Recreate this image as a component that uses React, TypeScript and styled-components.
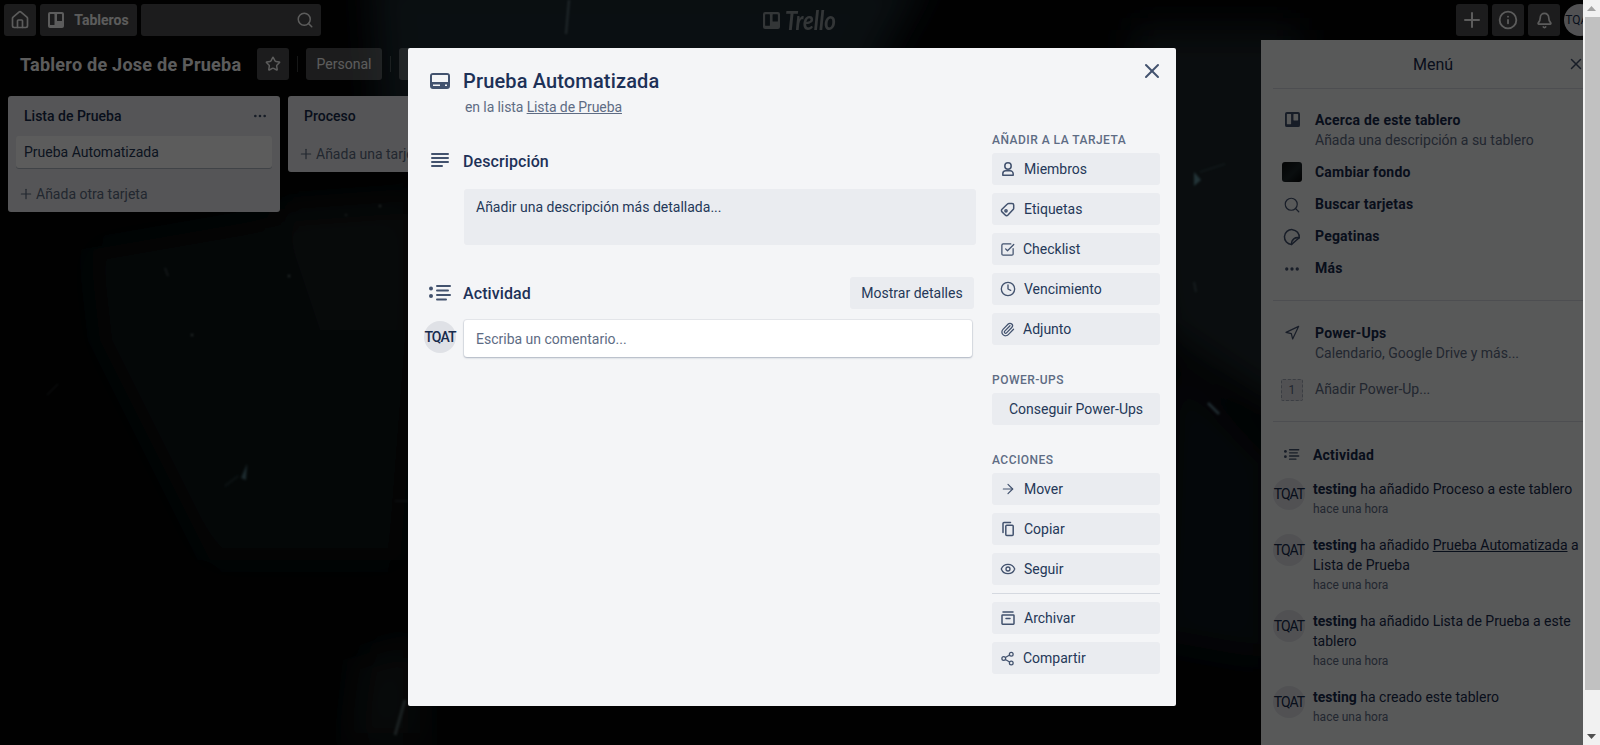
import styled, { createGlobalStyle } from "styled-components";
import {
  ArrowRight,
  Bell,
  CheckSquare,
  Clock,
  Ellipsis,
  Eye,
  Home,
  Info,
  Navigation,
  Paperclip,
  Plus,
  Search,
  Share2,
  Star,
  X,
} from "lucide-react";

const GlobalStyle = createGlobalStyle`
  html, body {
    margin: 0;
    padding: 0;
    overflow: hidden;
    background: #000;
  }
  * {
    box-sizing: border-box;
  }
  body {
    font-family: "Roboto", "Noto Sans", sans-serif;
    font-size: 14px;
    line-height: 20px;
    color: #172b4d;
  }
`;

const Page = styled.div`
  position: relative;
  width: 1600px;
  height: 745px;
  overflow: hidden;
  background: #030405;
`;
const Backdrop = styled.svg`
  position: absolute;
  inset: 0;
`;
const Board = styled.div`
  position: relative;
  display: flex;
  flex-direction: column;
  height: 100%;
`;

/* top bar */
const TopBar = styled.header`
  display: flex;
  align-items: center;
  height: 40px;
  padding: 4px;
`;
const TopGroup = styled.div<{ $end?: boolean }>`
  flex: 1 1 0;
  display: flex;
  gap: 4px;
  justify-content: ${(p) => (p.$end ? "flex-end" : "flex-start")};
`;
const TopButton = styled.div`
  display: flex;
  align-items: center;
  justify-content: center;
  gap: 10px;
  min-width: 32px;
  height: 32px;
  border-radius: 3px;
  background: rgba(255, 255, 255, 0.3);
  color: #fff;
  font-weight: 700;
`;
const BoardsButton = styled(TopButton)`
  width: 97px;
`;
const SearchBox = styled(TopButton)`
  width: 180px;
  justify-content: flex-end;
  padding-right: 7px;
`;
const Logo = styled.div`
  flex: none;
  display: flex;
  align-items: center;
  gap: 5px;
  width: 74px;
  color: rgba(255, 255, 255, 0.5);
  svg {
    flex: none;
  }
`;
const LogoText = styled.span`
  font-family: "Lato", sans-serif;
  font-style: italic;
  font-weight: 700;
  font-size: 27px;
  line-height: 30px;
  display: inline-block;
  transform: scaleX(0.82);
  transform-origin: left center;
`;
const UserBadge = styled.div`
  width: 32px;
  height: 32px;
  border-radius: 50%;
  background: #dfe1e6;
  color: #172b4d;
  font-size: 12px;
  line-height: 32px;
  text-align: center;
  white-space: nowrap;
  overflow: hidden;
`;

/* board bar */
const BoardBar = styled.div`
  display: flex;
  align-items: center;
  height: 32px;
  margin-top: 8px;
  padding: 0 8px;
`;
const BoardTitle = styled.h1`
  width: 249px;
  height: 32px;
  flex: none;
  margin: 0;
  padding: 0 12px;
  font-size: 18px;
  line-height: 34px;
  font-weight: 700;
  letter-spacing: 0.25px;
  color: #fff;
  white-space: nowrap;
`;
const BarButton = styled.div`
  display: flex;
  align-items: center;
  justify-content: center;
  min-width: 32px;
  height: 32px;
  padding: 0 6px;
  border-radius: 3px;
  background: rgba(255, 255, 255, 0.3);
  color: #fff;
  white-space: nowrap;
`;
const BarLabel = styled(BarButton)`
  width: 76px;
  padding: 0;
`;
const BarDivider = styled.span`
  width: 1px;
  height: 16px;
  margin: 0 8px;
  background: rgba(255, 255, 255, 0.24);
`;

/* lists */
const Lists = styled.div`
  display: flex;
  align-items: flex-start;
  gap: 8px;
  margin-top: 16px;
  padding-left: 8px;
`;
const List = styled.section`
  width: 272px;
  border-radius: 3px;
  background: #ebecf0;
  padding-bottom: 2px;
`;
const ListHead = styled.div`
  display: flex;
  align-items: center;
  justify-content: space-between;
  height: 40px;
  padding: 0 12px 0 16px;
  font-weight: 500;
  color: #172b4d;
`;
const CardList = styled.div`
  padding: 0 8px 2px;
`;
const Card = styled.div`
  height: 32px;
  margin-bottom: 8px;
  padding: 6px 8px;
  border-radius: 3px;
  background: #fff;
  box-shadow: 0 1px 0 rgba(9, 30, 66, 0.25);
  color: #253858;
`;
const AddCard = styled.div`
  display: flex;
  align-items: center;
  gap: 2px;
  height: 32px;
  margin: 0 8px;
  padding: 0 2px;
  color: #5e6c84;
  white-space: nowrap;
`;

/* side menu */
const Menu = styled.aside`
  position: absolute;
  top: 40px;
  left: 1261px;
  width: 344px;
  bottom: 0;
  padding: 0 12px;
  background: #f4f5f7;
`;
const MenuHead = styled.div`
  position: relative;
  height: 49px;
  border-bottom: 1px solid rgba(9, 30, 66, 0.13);
  font-size: 16px;
  font-weight: 400;
  line-height: 49px;
  text-align: center;
`;
const MenuClose = styled.span`
  position: absolute;
  right: 8px;
  top: 15px;
  display: flex;
`;
const MenuSection = styled.div<{ $top: number }>`
  padding: ${(p) => p.$top}px 0 16px;
  border-bottom: 1px solid rgba(9, 30, 66, 0.13);
`;
const MenuRow = styled.div<{ $gap?: number }>`
  display: flex;
  align-items: flex-start;
  padding: 6px 0;
  margin-top: ${(p) => p.$gap ?? 0}px;
  font-weight: 700;
  letter-spacing: 0.2px;
`;
const MenuIcon = styled.span`
  flex: none;
  display: flex;
  justify-content: center;
  width: 38px;
  padding: 2px 0 0;
  margin-right: 4px;
`;
const MenuSub = styled.div`
  font-weight: 400;
  letter-spacing: 0;
  color: #5e6c84;
`;
const Swatch = styled.span`
  display: block;
  width: 20px;
  height: 20px;
  margin-top: -2px;
  border-radius: 3px;
  background: linear-gradient(135deg, #0a0d0e, #1c2629 55%, #050607);
`;
const PowerBox = styled.span`
  display: block;
  width: 22px;
  height: 22px;
  margin: -2px 0;
  border: 1px dashed #a5adba;
  border-radius: 2px;
  background: #dfe1e6;
  color: #5e6c84;
  font-size: 12px;
  line-height: 20px;
  font-weight: 400;
  text-align: center;
`;
const Feed = styled.div`
  padding-top: 23px;
`;
const FeedHead = styled.div`
  display: flex;
  align-items: center;
  margin-bottom: 13px;
  font-weight: 700;
  letter-spacing: 0.2px;
`;
const FeedHeadIcon = styled.span`
  display: flex;
  justify-content: center;
  width: 38px;
  margin-right: 2px;
  color: #42526e;
`;
const FeedItem = styled.div`
  display: flex;
  margin-bottom: 16px;
`;
const FeedBadge = styled.div<{ $strong?: boolean }>`
  flex: none;
  display: flex;
  justify-content: center;
  width: 32px;
  height: 32px;
  border-radius: 50%;
  background: #dfe1e6;
  color: #172b4d;
  font-size: 14px;
  font-weight: ${(p) => (p.$strong ? 500 : 400)};
  letter-spacing: -1px;
  line-height: 32px;
  white-space: nowrap;
`;
const FeedBody = styled.div`
  height: 100%;
  margin-left: 8px;
  padding-top: 1px;
  margin-bottom: -1px;
  color: #172b4d;
  a {
    color: #172b4d;
    text-decoration: underline;
  }
`;
const FeedTime = styled.div`
  font-size: 12px;
  color: #5e6c84;
`;

/* modal */
const Overlay = styled.div`
  position: absolute;
  inset: 0;
  display: flex;
  justify-content: center;
  align-items: flex-start;
  padding: 48px 16px 0 0;
  background: rgba(0, 0, 0, 0.64);
`;
const Modal = styled.div`
  position: relative;
  display: flex;
  width: 768px;
  padding: 0 16px 32px;
  border-radius: 2px;
  background: #f4f5f7;
  color: #172b4d;
`;
const ModalClose = styled.span`
  position: absolute;
  top: 11px;
  right: 12px;
  display: flex;
  color: #42526e;
`;
const Main = styled.div`
  width: 552px;
  padding-top: 21px;
`;
const HeadRow = styled.div`
  display: flex;
  align-items: center;
  gap: 8px;
`;
const HeadIcon = styled.span`
  flex: none;
  display: flex;
  justify-content: center;
  width: 32px;
  color: #42526e;
`;
const CardTitle = styled.h2`
  margin: 0 0 0 -1px;
  font-size: 20px;
  line-height: 24px;
  font-weight: 500;
  letter-spacing: 0.15px;
  color: #1d3157;
`;
const InList = styled.div`
  margin: 4px 0 0 41px;
  letter-spacing: -0.1px;
  color: #5e6c84;
  a {
    color: #5e6c84;
    text-decoration: underline;
  }
`;
const SectionTitle = styled.h3`
  flex: 1;
  height: 24px;
  margin: 0 0 0 -1px;
  font-size: 16px;
  line-height: 26px;
  font-weight: 500;
  letter-spacing: 0.1px;
  color: #1d3157;
`;
const DescriptionHead = styled(HeadRow)`
  margin-top: 32px;
`;
const DescriptionBox = styled.div`
  height: 56px;
  margin: 16px 0 0 40px;
  padding: 8px 12px;
  border-radius: 3px;
  background: rgba(9, 30, 66, 0.04);
  color: #253858;
`;
const ActivityHead = styled(HeadRow)`
  height: 32px;
  margin-top: 32px;
  padding-right: 2px;
`;
const DetailsButton = styled.div`
  width: 124px;
  height: 32px;
  padding: 6px 0;
  border-radius: 3px;
  background: rgba(9, 30, 66, 0.04);
  color: #253858;
  text-align: center;
  white-space: nowrap;
`;
const CommentRow = styled.div`
  display: flex;
  align-items: flex-start;
  gap: 8px;
  margin-top: 11px;
  padding: 0 4px 0 0;
`;
const CommentAvatar = styled.div`
  margin-top: 1px;
`;
const CommentBox = styled.div`
  flex: 1;
  height: 37px;
  padding: 9px 12px 7px;
  border-radius: 3px;
  background: #fff;
  box-shadow: 0 1px 2px rgba(9, 30, 66, 0.25), 0 0 0 1px rgba(9, 30, 66, 0.06);
  color: #5e6c84;
`;
const Sidebar = styled.div`
  width: 168px;
  margin-left: 16px;
  padding-top: 84px;
`;
const SideLabel = styled.h4<{ $first?: boolean }>`
  margin: ${(p) => (p.$first ? 0 : "27px")} 0 5px;
  font-size: 12px;
  line-height: 16px;
  font-weight: 500;
  letter-spacing: 0.04em;
  text-transform: uppercase;
  color: #5e6c84;
`;
const SideButton = styled.div<{ $center?: boolean }>`
  display: flex;
  align-items: center;
  justify-content: ${(p) => (p.$center ? "center" : "flex-start")};
  gap: 8px;
  height: 32px;
  padding: 0 8px;
  border-radius: 3px;
  background: rgba(9, 30, 66, 0.04);
  color: #253858;
  white-space: nowrap;
  & + & {
    margin-top: 8px;
  }
  svg {
    flex: none;
    color: #42526e;
  }
`;
const SideDivider = styled.hr`
  height: 1px;
  margin: 8px 0;
  border: 0;
  background: rgba(9, 30, 66, 0.13);
`;

/* fake browser scrollbar sitting over the page */
const ScrollBar = styled.div`
  position: absolute;
  top: 0;
  right: 0;
  width: 17px;
  height: 100%;
  display: flex;
  flex-direction: column;
  background: #f1f1f1;
`;
const ScrollArrow = styled.div`
  flex: none;
  display: flex;
  align-items: center;
  justify-content: center;
  height: 17px;
`;
const ScrollThumb = styled.div`
  height: 673px;
  margin-left: 2px;
  background: #c1c1c1;
`;
const ScrollRest = styled.div`
  flex: 1;
`;

const BoardGlyph = ({ size = 16, color = "currentColor" }: { size?: number; color?: string }) => (
  <svg width={size} height={size} viewBox="0 0 16 16" fill={color}>
    <path
      fillRule="evenodd"
      d="M2 0h12a2 2 0 0 1 2 2v12a2 2 0 0 1-2 2H2a2 2 0 0 1-2-2V2a2 2 0 0 1 2-2zm.5 2a.5.5 0 0 0-.5.5V12.5a.5.5 0 0 0 .5.5h3.5a.5.5 0 0 0 .5-.5V2.5a.5.5 0 0 0-.5-.5zm7 0a.5.5 0 0 0-.5.5V8.5a.5.5 0 0 0 .5.5h4a.5.5 0 0 0 .5-.5V2.5a.5.5 0 0 0-.5-.5z"
    />
  </svg>
);

const CardGlyph = () => (
  <svg width="20" height="16" viewBox="0 0 20 16" fill="currentColor">
    <path
      fillRule="evenodd"
      d="M3 0h14a3 3 0 0 1 3 3v10a3 3 0 0 1-3 3H3a3 3 0 0 1-3-3V3a3 3 0 0 1 3-3zm-.5 2a.5.5 0 0 0-.5.5V9h16V2.5a.5.5 0 0 0-.5-.5zM3 11.5v1.5h7v-1.5zm12 0v1.5h2v-1.5z"
    />
  </svg>
);

const LinesGlyph = () => (
  <svg width="20" height="16" viewBox="0 0 20 16" fill="currentColor">
    <rect x="1" y="0" width="18" height="2" rx="1" />
    <rect x="1" y="4" width="18" height="2" rx="1" />
    <rect x="1" y="8" width="18" height="2" rx="1" />
    <rect x="1" y="12" width="12" height="2" rx="1" />
  </svg>
);

const ActivityGlyph = ({ scale = 1 }: { scale?: number }) => (
  <svg width={22 * scale} height={16 * scale} viewBox="0 0 22 16" fill="currentColor">
    <circle cx="2" cy="3.5" r="2" />
    <circle cx="2" cy="11" r="2" />
    <rect x="7" y="0" width="15" height="2" rx="1" />
    <rect x="7" y="4.5" width="13" height="2" rx="1" />
    <rect x="7" y="9" width="15" height="2" rx="1" />
    <rect x="7" y="13.5" width="11" height="2" rx="1" />
  </svg>
);

const outline = {
  fill: "none",
  stroke: "currentColor",
  strokeWidth: 1.5,
  strokeLinecap: "round" as const,
  strokeLinejoin: "round" as const,
};

const MemberGlyph = () => (
  <svg width="16" height="16" viewBox="0 0 16 16" {...outline}>
    <circle cx="8" cy="5" r="3.2" />
    <path d="M2.8 14.2v-1.4a3 3 0 0 1 3-3h4.4a3 3 0 0 1 3 3v1.4z" />
  </svg>
);

const LabelGlyph = () => (
  <svg width="16" height="16" viewBox="0 0 16 16" {...outline}>
    <path d="M2 8.2 7.4 3a2 2 0 0 1 1.4-.6h3.3a1.6 1.6 0 0 1 1.6 1.6v3.2a2 2 0 0 1-.6 1.4L8 14a2 2 0 0 1-2.8 0L2 10.9a1.9 1.9 0 0 1 0-2.7z" />
    <circle cx="6" cy="9.8" r="1.1" />
  </svg>
);

const CopyGlyph = () => (
  <svg width="16" height="16" viewBox="0 0 16 16" {...outline}>
    <rect x="5.8" y="4.2" width="7.4" height="10.2" rx="1" />
    <path d="M3 11.5V2.6a1 1 0 0 1 1-1h6.5" />
  </svg>
);

const ArchiveGlyph = () => (
  <svg width="16" height="16" viewBox="0 0 16 16" {...outline}>
    <path d="M3 2h10" />
    <rect x="2" y="5" width="12" height="9.2" rx="0.6" />
    <path d="M6 8.4h4" />
  </svg>
);

const StickerGlyph = ({ color }: { color: string }) => (
  <svg width="18" height="18" viewBox="0 0 18 18" {...outline} stroke={color}>
    <path d="M16.2 9.8A7.4 7.4 0 1 0 8.6 16.4z" />
    <path d="M16.2 9.8c-4-.8-7.9 1.4-7.6 6.6" />
  </svg>
);

const addItems = [
  { label: "Miembros", icon: <MemberGlyph /> },
  { label: "Etiquetas", icon: <LabelGlyph /> },
  { label: "Checklist", icon: <CheckSquare size={15} strokeWidth={2} /> },
  { label: "Vencimiento", icon: <Clock size={16} strokeWidth={2} /> },
  { label: "Adjunto", icon: <Paperclip size={15} strokeWidth={2} /> },
];
const moveItems = [
  { label: "Mover", icon: <ArrowRight size={16} strokeWidth={1.8} /> },
  { label: "Copiar", icon: <CopyGlyph /> },
  { label: "Seguir", icon: <Eye size={16} strokeWidth={2} /> },
];
const endItems = [
  { label: "Archivar", icon: <ArchiveGlyph /> },
  { label: "Compartir", icon: <Share2 size={15} strokeWidth={2} /> },
];

function App() {
  return (
    <Page>
      <GlobalStyle />
      <Backdrop width="1600" height="745" viewBox="0 0 1600 745">
        <defs>
          <filter id="soft" filterUnits="userSpaceOnUse" x="-100" y="-100" width="1800" height="945">
            <feGaussianBlur stdDeviation="18" />
          </filter>
          <filter id="softer" filterUnits="userSpaceOnUse" x="-100" y="-100" width="1800" height="945">
            <feGaussianBlur stdDeviation="0.8" />
          </filter>
        </defs>
        <g filter="url(#soft)">
          <polygon points="370,-30 930,-30 880,60 820,230 560,260 380,120" fill="#1b2a30" />
          <polygon points="1130,30 1300,30 1300,420 1250,390 1160,330" fill="#1a272c" />
          <polygon points="1170,360 1270,460 1270,660 1160,640" fill="#10181b" />
          <polygon points="90,250 320,210 420,300 400,560 210,560 100,340" fill="#0f1518" />
          <polygon points="280,210 420,200 420,330 320,330" fill="#131a1c" />
          <polygon points="360,660 420,640 420,745 350,745" fill="#151c1e" />
        </g>
        <g filter="url(#softer)">
          <path d="M569 0 L566 34" stroke="#5d7078" strokeWidth="2" />
          <path d="M1194 186 L1194 172 L1201 180 Z" fill="#5f8d98" />
          <path d="M1200 172 L1225 164" stroke="#3c565e" strokeWidth="1" />
          <path d="M1208 403 L1219 414" stroke="#597c8a" strokeWidth="2.5" />
          <path d="M1194 282 L1196 292" stroke="#4a5a5e" strokeWidth="1.5" />
          <path d="M241 478 L247 464 L246 480 Z" fill="#4f7480" />
          <path d="M225 486 L238 476" stroke="#2b3e44" strokeWidth="1.5" />
          <path d="M165 268 L168 276" stroke="#56646a" strokeWidth="1" />
          <path d="M47 395 L58 384" stroke="#323f43" strokeWidth="1" />
          <path d="M395 501 L408 501" stroke="#323f43" strokeWidth="1" />
          <path d="M395 735 L405 700" stroke="#4a5a5c" strokeWidth="3" />
          <circle cx="192" cy="335" r="1" fill="#9aa6a8" />
          <circle cx="289" cy="276" r="1" fill="#9aa6a8" />
          <circle cx="380" cy="206" r="1" fill="#8d999b" />
          <circle cx="346" cy="215" r="0.8" fill="#8d999b" />
        </g>
      </Backdrop>

      <Board>
        <TopBar>
          <TopGroup>
            <TopButton>
              <Home size={20} strokeWidth={2} />
            </TopButton>
            <BoardsButton>
              <BoardGlyph />
              Tableros
            </BoardsButton>
            <SearchBox>
              <Search size={18} strokeWidth={2} />
            </SearchBox>
          </TopGroup>
          <Logo>
            <BoardGlyph size={17} />
            <LogoText>Trello</LogoText>
          </Logo>
          <TopGroup $end>
            <TopButton>
              <Plus size={24} strokeWidth={2} />
            </TopButton>
            <TopButton>
              <Info size={20} strokeWidth={2.2} />
            </TopButton>
            <TopButton>
              <Bell size={17} strokeWidth={2.4} />
            </TopButton>
            <UserBadge>TQAT</UserBadge>
          </TopGroup>
        </TopBar>

        <BoardBar>
          <BoardTitle>Tablero de Jose de Prueba</BoardTitle>
          <BarButton>
            <Star size={16} strokeWidth={2.2} />
          </BarButton>
          <BarDivider />
          <BarLabel>Personal</BarLabel>
          <BarDivider />
          <BarLabel>Privado</BarLabel>
        </BoardBar>

        <Lists>
          <List>
            <ListHead>
              Lista de Prueba
              <Ellipsis size={16} color="#42526e" />
            </ListHead>
            <CardList>
              <Card>Prueba Automatizada</Card>
            </CardList>
            <AddCard>
              <Plus size={16} strokeWidth={1.8} />
              Añada otra tarjeta
            </AddCard>
          </List>
          <List>
            <ListHead>Proceso</ListHead>
            <CardList />
            <AddCard>
              <Plus size={16} strokeWidth={1.8} />
              Añada una tarjeta
            </AddCard>
          </List>
        </Lists>
      </Board>

      <Menu>
        <MenuHead>
          Menú
          <MenuClose>
            <X size={18} color="#42526e" />
          </MenuClose>
        </MenuHead>
        <MenuSection $top={15}>
          <MenuRow>
            <MenuIcon>
              <BoardGlyph size={15} color="#42526e" />
            </MenuIcon>
            <div>
              Acerca de este tablero
              <MenuSub>Añada una descripción a su tablero</MenuSub>
            </div>
          </MenuRow>
          <MenuRow>
            <MenuIcon>
              <Swatch />
            </MenuIcon>
            Cambiar fondo
          </MenuRow>
          <MenuRow>
            <MenuIcon>
              <Search size={18} color="#42526e" strokeWidth={1.6} />
            </MenuIcon>
            Buscar tarjetas
          </MenuRow>
          <MenuRow>
            <MenuIcon>
              <StickerGlyph color="#42526e" />
            </MenuIcon>
            Pegatinas
          </MenuRow>
          <MenuRow>
            <MenuIcon>
              <Ellipsis size={18} color="#42526e" strokeWidth={2.4} />
            </MenuIcon>
            Más
          </MenuRow>
        </MenuSection>
        <MenuSection $top={16}>
          <MenuRow>
            <MenuIcon>
              <Navigation size={16} color="#42526e" strokeWidth={1.8} />
            </MenuIcon>
            <div>
              Power-Ups
              <MenuSub>Calendario, Google Drive y más...</MenuSub>
            </div>
          </MenuRow>
          <MenuRow $gap={4}>
            <MenuIcon>
              <PowerBox>1</PowerBox>
            </MenuIcon>
            <MenuSub>Añadir Power-Up...</MenuSub>
          </MenuRow>
        </MenuSection>
        <Feed>
          <FeedHead>
            <FeedHeadIcon>
              <ActivityGlyph scale={0.7} />
            </FeedHeadIcon>
            Actividad
          </FeedHead>
          <FeedItem>
            <FeedBadge>TQAT</FeedBadge>
            <FeedBody>
              <strong>testing</strong> ha añadido Proceso a este tablero
              <FeedTime>hace una hora</FeedTime>
            </FeedBody>
          </FeedItem>
          <FeedItem>
            <FeedBadge>TQAT</FeedBadge>
            <FeedBody>
              <strong>testing</strong> ha añadido <a>Prueba Automatizada</a> a Lista de Prueba
              <FeedTime>hace una hora</FeedTime>
            </FeedBody>
          </FeedItem>
          <FeedItem>
            <FeedBadge>TQAT</FeedBadge>
            <FeedBody>
              <strong>testing</strong> ha añadido Lista de Prueba a este tablero
              <FeedTime>hace una hora</FeedTime>
            </FeedBody>
          </FeedItem>
          <FeedItem>
            <FeedBadge>TQAT</FeedBadge>
            <FeedBody>
              <strong>testing</strong> ha creado este tablero
              <FeedTime>hace una hora</FeedTime>
            </FeedBody>
          </FeedItem>
        </Feed>
      </Menu>

      <Overlay>
        <Modal>
          <ModalClose>
            <X size={24} strokeWidth={2} />
          </ModalClose>
          <Main>
            <HeadRow>
              <HeadIcon>
                <CardGlyph />
              </HeadIcon>
              <CardTitle>Prueba Automatizada</CardTitle>
            </HeadRow>
            <InList>
              en la lista <a>Lista de Prueba</a>
            </InList>
            <DescriptionHead>
              <HeadIcon>
                <LinesGlyph />
              </HeadIcon>
              <SectionTitle>Descripción</SectionTitle>
            </DescriptionHead>
            <DescriptionBox>Añadir una descripción más detallada...</DescriptionBox>
            <ActivityHead>
              <HeadIcon>
                <ActivityGlyph />
              </HeadIcon>
              <SectionTitle>Actividad</SectionTitle>
              <DetailsButton>Mostrar detalles</DetailsButton>
            </ActivityHead>
            <CommentRow>
              <CommentAvatar>
                <FeedBadge $strong>TQAT</FeedBadge>
              </CommentAvatar>
              <CommentBox>Escriba un comentario...</CommentBox>
            </CommentRow>
          </Main>
          <Sidebar>
            <SideLabel $first>Añadir a la tarjeta</SideLabel>
            {addItems.map((item) => (
              <SideButton key={item.label}>
                {item.icon}
                {item.label}
              </SideButton>
            ))}
            <SideLabel>Power-Ups</SideLabel>
            <SideButton $center>Conseguir Power-Ups</SideButton>
            <SideLabel>Acciones</SideLabel>
            {moveItems.map((item) => (
              <SideButton key={item.label}>
                {item.icon}
                {item.label}
              </SideButton>
            ))}
            <SideDivider />
            {endItems.map((item) => (
              <SideButton key={item.label}>
                {item.icon}
                {item.label}
              </SideButton>
            ))}
          </Sidebar>
        </Modal>
      </Overlay>

      <ScrollBar>
        <ScrollArrow>
          <svg width="9" height="5" viewBox="0 0 9 5">
            <path d="M4.5 0 9 5H0z" fill="#a3a3a3" />
          </svg>
        </ScrollArrow>
        <ScrollThumb />
        <ScrollRest />
        <ScrollArrow>
          <svg width="9" height="5" viewBox="0 0 9 5">
            <path d="M0 0h9L4.5 5z" fill="#505050" />
          </svg>
        </ScrollArrow>
      </ScrollBar>
    </Page>
  );
}

export default App;
